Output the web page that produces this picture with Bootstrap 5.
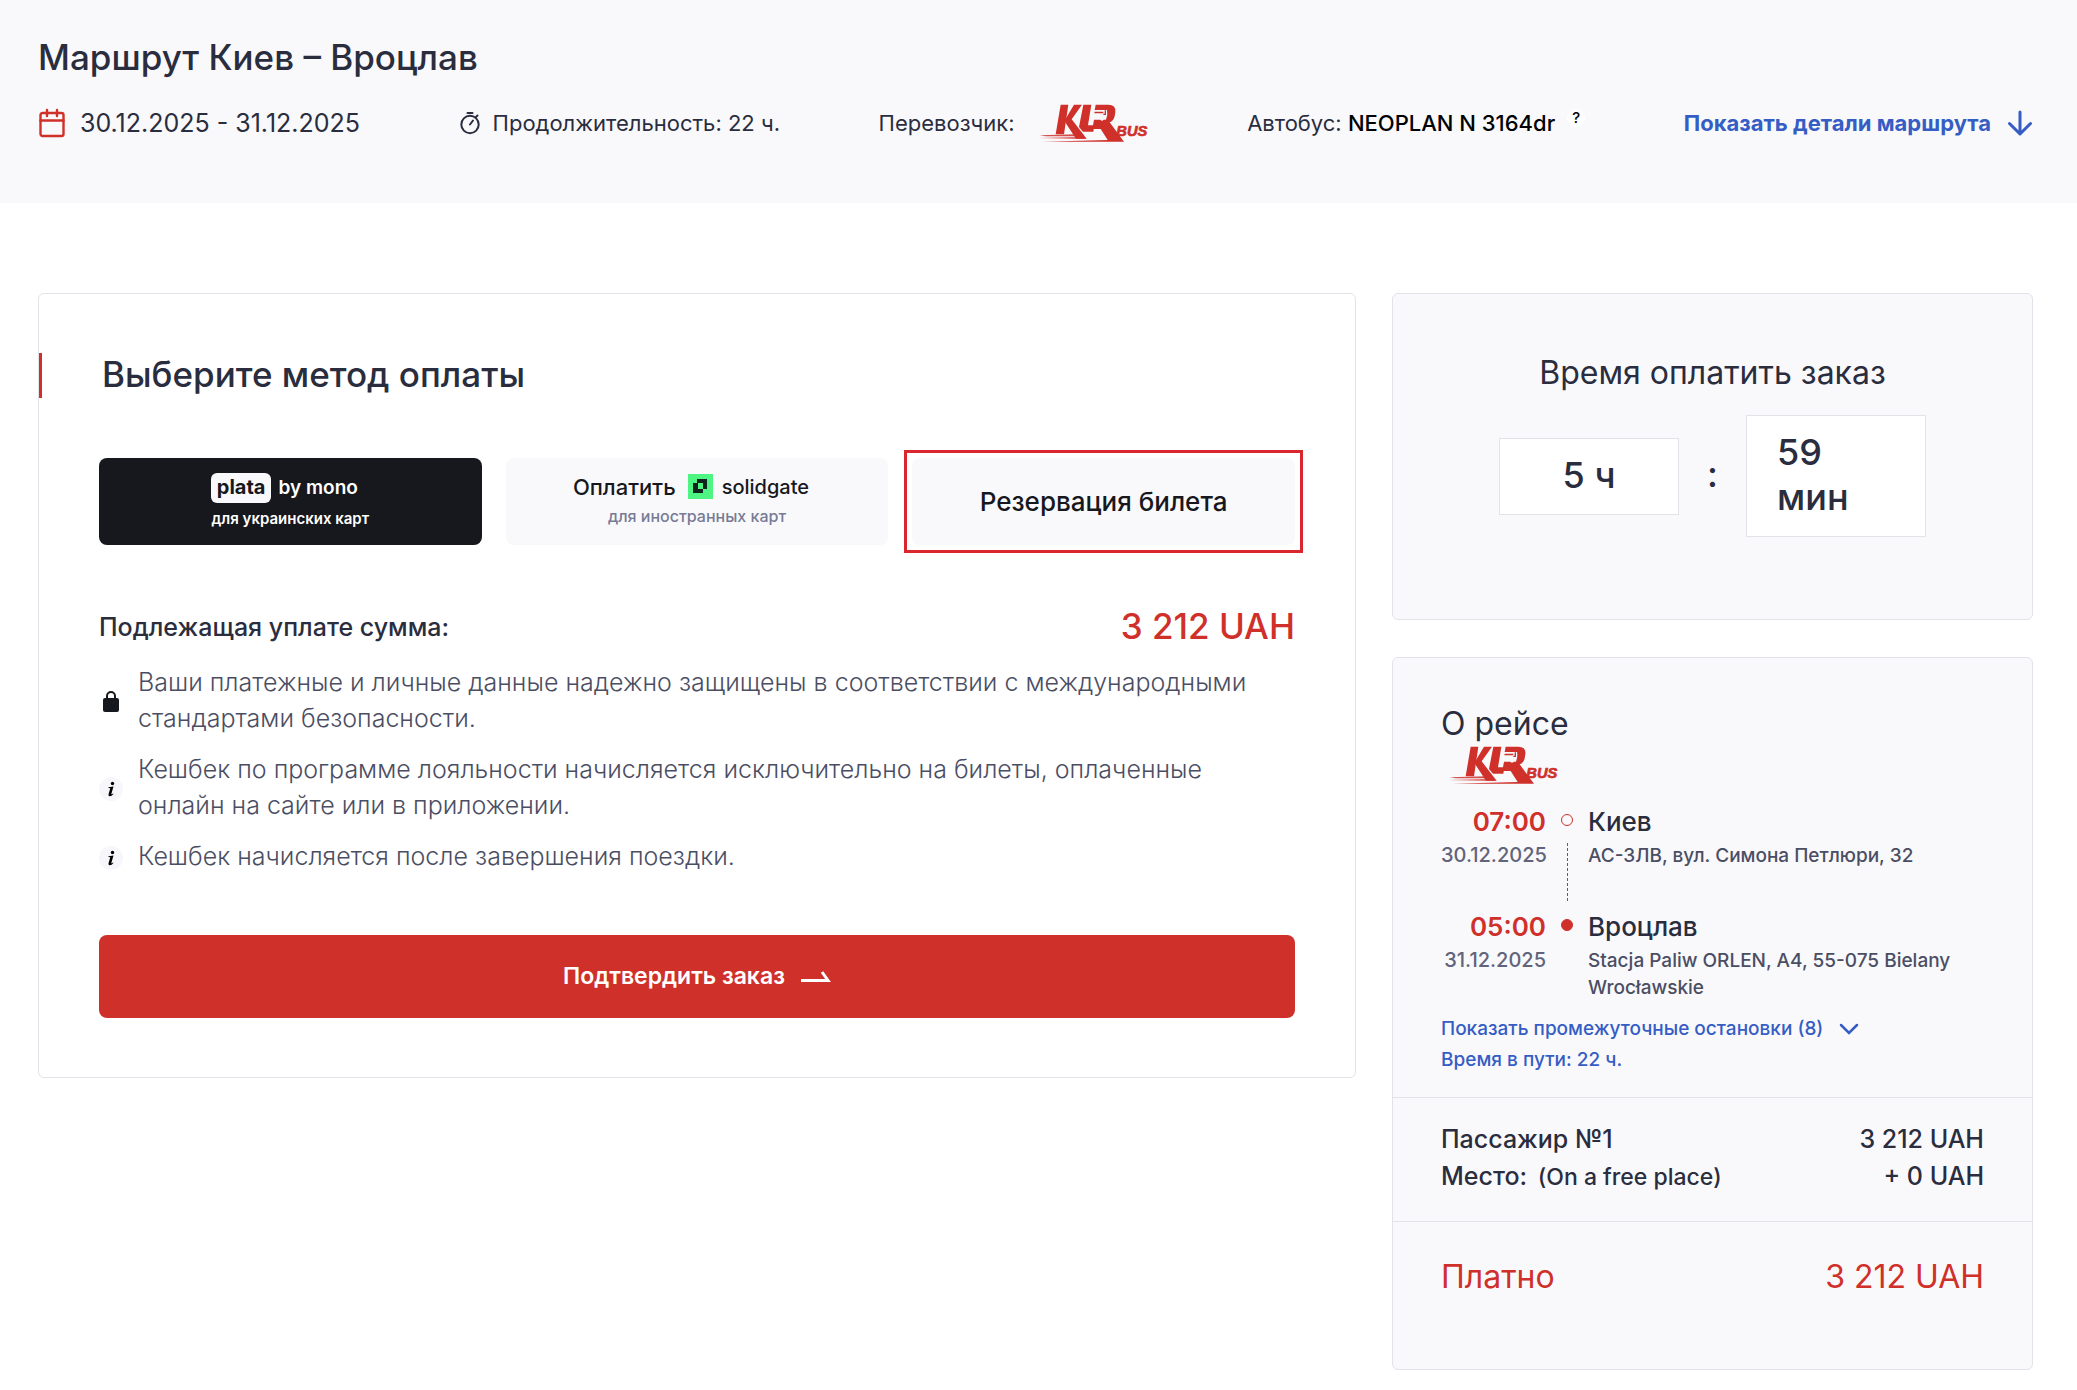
<!DOCTYPE html>
<html lang="ru">
<head>
<meta charset="utf-8">
<meta name="viewport" content="width=device-width, initial-scale=1">
<title>Маршрут Киев – Вроцлав</title>
<link href="https://cdn.jsdelivr.net/npm/bootstrap@5.3.0/dist/css/bootstrap.min.css" rel="stylesheet">
<style>
:root { --ink:#2a2d3e; --ink-soft:#4b4e63; --dark:#17181d; --brand:#d0302a; --accent:#355dc4; --panel:#f9f9fc; --line:#e2e3e9; }
body { font-family: Inter, "Noto Sans", sans-serif; color: var(--ink); background:#fff; font-size:25px; line-height:36px; }
a { color: var(--accent); text-decoration:none; }
.page-x { padding-left:38px; padding-right:44px; }
.route-head { background: var(--panel); padding-top:33px; padding-bottom:57px; }
.title-lg { font-size:35px; line-height:48px; font-weight:500; margin:0; }
.route-head .title-lg { margin-bottom:19px; }
.route-facts { min-height:46px; }
.fact { font-size:22px; line-height:30px; }
.fact-date { font-size:25px; gap:14px; }
.fact-time { gap:12px; }
.help-dot { width:18px; height:18px; border:0; padding:0; border-radius:50%; background:#fff; color:#000; font-size:15px; line-height:18px; font-weight:500; margin-left:12px; margin-bottom:10px; }
.route-main { padding-top:90px; padding-bottom:18px; }
.route-main > .row { --bs-gutter-x:36px; }
.box { border:1px solid var(--line); border-radius:6px; }
.box-tint { background: var(--panel); }
.pay-box { padding:59px 60px 59px; }
.pay-title { border-left:3px solid var(--brand); line-height:43px; margin:0 -60px 60px; padding:0 0 2px 60px; }
.pay-methods { display:grid; grid-template-columns:repeat(3,1fr); gap:24px; margin-bottom:59px; }
.method { position:relative; height:87px; border:0; border-radius:8px; background:var(--panel); color:var(--dark); padding:0; display:flex; flex-direction:column; align-items:center; justify-content:center; font-weight:500; }
.method-dark { background:var(--dark); color:#fff; }
.method-dark .method-top { font-size:19px; font-weight:600; gap:7px; }
.method-dark .method-note { margin:6px 0 2px; font-weight:600; font-size:15px; color:#fff; }
.pill { background:#f9f9fc; color:var(--dark); border-radius:6px; padding:0 6px 2px; font-size:20px; line-height:28px; font-weight:700; }
.method-top { font-size:22px; line-height:30px; padding-right:12px; }
.method-note { font-size:16px; line-height:20px; color:#777b96; margin:4px 0 6px; }
.gate-name { font-size:20px; }
.gate-mark { margin:0 9px 0 12px; }
.method-active::after { content:""; position:absolute; inset:-8px; border:3px solid #d9262f; }
.method-active { font-size:26px; }
.sum-price { font-size:35px; line-height:45px; font-weight:500; color:var(--brand); }
.sum-label { font-weight:500; }
.notes { list-style:none; margin:15px 0 61px; padding:0; display:flex; flex-direction:column; gap:15px; color:var(--ink-soft); font-weight:300; }
.notes li { display:flex; align-items:center; gap:15px; }
.note-ico { width:24px; height:24px; flex:none; margin-top:3px; }
.btn-confirm { height:83px; background:var(--brand); color:#fff; border:0; border-radius:8px; font-size:23px; font-weight:600; padding-bottom:6px; }
.btn-confirm:hover { background:#b92822; color:#fff; }
.timer-box { padding:56px 48px 82px; }
.title-md { font-size:32px; line-height:45px; font-weight:400; margin:0; }
.clock { margin-top:20px; font-size:36px; line-height:45px; font-weight:500; }
.clock-cell { width:180px; padding:14px 30px 16px; background:#fff; border:1px solid var(--line); }
.clock-sep { width:67px; text-align:center; padding-bottom:4px; }
.side-stack { gap:37px; }
.trip-part { padding:48px 48px 22px; }
.trip-part + .trip-part { border-top:1px solid var(--line); padding-top:23px; padding-bottom:25px; }
.trip-part.trip-total { padding-top:32px; padding-bottom:70px; color:var(--brand); }
.trip-part .title-flight { line-height:36px; }
.trip-logo { margin:4px 0 23px 8px; display:block; }
.stop { display:grid; grid-template-columns:105px 16px 1fr; column-gap:13px; font-size:19px; line-height:27px; font-weight:500; color:var(--ink-soft); }
.stop-main { font-size:26px; line-height:30px; margin-bottom:5px; color:var(--ink); }
.stop-time { color:var(--brand); font-weight:600; }
.stop-first { min-height:105px; }
.stop-date { color:#61647a; font-size:20px; }
.track { display:flex; flex-direction:column; align-items:center; }
.track-dot { width:12px; height:12px; flex:none; margin-top:7px; border:1px solid var(--brand); border-radius:50%; }
.track-end { background:var(--brand); }
.track-line { width:0; flex:1; margin:17px 0 11px; border-left:1px dashed var(--brand); }
.trip-links { margin-top:12px; font-size:19px; line-height:31px; font-weight:500; color:var(--accent); }
.fare { line-height:37px; font-weight:500; }
.fare-seat { font-size:23px; }
.trip-total .title-md { color:inherit; }
.klr-word { font-family:"Liberation Sans", sans-serif; font-size:44px; font-weight:700; font-style:italic; fill:var(--brand); stroke:var(--brand); stroke-width:2px; }
</style>
</head>
<body>
<header class="route-head page-x">
  <h1 class="title-lg">Маршрут Киев – Вроцлав</h1>
  <div class="route-facts d-flex align-items-center justify-content-between">
    <div class="fact fact-date d-flex align-items-center">
      <svg width="28" height="30" viewBox="0 0 28 30" fill="none" stroke="#d0302a" stroke-width="2.4" stroke-linecap="round" aria-hidden="true"><rect x="2.500" y="5" width="23" height="23" rx="2"/><path d="M2.500 12.500h23M9 2v6M19 2v6"/></svg>
      30.12.2025 - 31.12.2025
    </div>
    <div class="fact fact-time d-flex align-items-center">
      <svg width="22" height="24" viewBox="0 0 22 24" fill="none" stroke="#2a2d3e" stroke-width="2" stroke-linecap="round" aria-hidden="true"><circle cx="11" cy="13.500" r="8.700"/><path d="M8.500 2h5M11 13.500l3-4M17 6l1.500-1.500"/></svg>
      Продолжительность: 22 ч.
    </div>
    <div class="fact d-flex align-items-center">
      Перевозчик:
      <svg class="ms-4" width="110" height="38" viewBox="20 31 330 114" role="img" aria-label="KLR Bus">
        <g id="klr-mark" fill="#d0302a">
          <path d="M85 33h23L95 122H70z"/>
          <path d="M98 78l27-45h24l-31 44 45 58h-32l-31-47z"/>
          <path d="M22 125l110-3 12 6H40zM20 133l125-3 18 6z" opacity=".85"/>
          <path d="M153 33h24l-10 62h19l-3 19h-31l-12-14z"/>
          <path d="M190 33h38q24 0 21 23l-2 12q-3 14-15 18l43 58H30l196-5-21-33h-25l5-28h36q6-14 3-29h-37z"/>
          <path d="M187 54h26v5h-27zM217 50h4v14h-8v-4h4z"/>
          <circle cx="209" cy="76" r="5" fill="#f9f9fc"/>
        </g>
        <text class="klr-word" x="252" y="126">BUS</text>
      </svg>
    </div>
    <div class="fact d-flex align-items-center">
      <span>Автобус: <span class="fw-medium text-black">NEOPLAN N 3164dr</span></span>
      <button type="button" class="help-dot">?</button>
    </div>
    <a href="#details" class="fact fw-bold d-flex align-items-center">
      Показать детали маршрута
      <svg class="ms-3" width="26" height="26" viewBox="0 0 26 26" fill="none" stroke="currentColor" stroke-width="3" stroke-linecap="round" stroke-linejoin="round" aria-hidden="true"><path d="M13 2v22M2.500 13.500L13 24l10.500-10.500"/></svg>
    </a>
  </div>
</header>

<main class="route-main page-x">
  <div class="row align-items-start">
    <div class="col-8">
      <section class="box pay-box">
        <h2 class="title-lg pay-title">Выберите метод оплаты</h2>
        <div class="pay-methods">
          <button type="button" class="method method-dark">
            <span class="method-top d-flex align-items-center"><span class="pill">plata</span>by mono</span>
            <span class="method-note">для украинских карт</span>
          </button>
          <button type="button" class="method">
            <span class="method-top d-flex align-items-center">Оплатить
              <svg class="gate-mark" width="25" height="25" viewBox="0 0 25 25" aria-hidden="true"><path fill="#4ff582" d="M0 0h25v25H0z"/><path fill="#10231d" fill-rule="evenodd" d="M9 5h10v10h-4v4H5V9h4zm1 4v6h5V9z"/></svg>
              <span class="gate-name">solidgate</span></span>
            <span class="method-note">для иностранных карт</span>
          </button>
          <button type="button" class="method method-active">Резервация билета</button>
        </div>
        <div class="d-flex align-items-center justify-content-between">
          <span class="sum-label">Подлежащая уплате сумма:</span>
          <span class="sum-price">3 212 UAH</span>
        </div>
        <ul class="notes">
          <li>
            <svg class="note-ico" viewBox="0 0 24 24" aria-hidden="true"><rect x="4" y="8" width="16" height="14" rx="2" fill="#17181d"/><path d="M8 9V6a4 4 0 018 0v3" fill="none" stroke="#17181d" stroke-width="2"/></svg>
            <span>Ваши платежные и личные данные надежно защищены в соответствии с международными<br>стандартами безопасности.</span>
          </li>
          <li>
            <svg class="note-ico" viewBox="0 0 24 24" aria-hidden="true"><circle cx="12" cy="12" r="12" fill="#f7f7fb"/><circle cx="13.500" cy="6.500" r="1.700"/><path d="M9.500 10.200l5-.8-2.200 7.500q-.2 1 1.700-.5l.5.500q-2.200 2.600-4 2.300-1.500-.4-.9-2.300l1.700-5.600-1.900-.3z"/></svg>
            <span>Кешбек по программе лояльности начисляется исключительно на билеты, оплаченные<br>онлайн на сайте или в приложении.</span>
          </li>
          <li>
            <svg class="note-ico" viewBox="0 0 24 24" aria-hidden="true"><circle cx="12" cy="12" r="12" fill="#f7f7fb"/><circle cx="13.500" cy="6.500" r="1.700"/><path d="M9.500 10.200l5-.8-2.200 7.500q-.2 1 1.700-.5l.5.500q-2.200 2.600-4 2.300-1.500-.4-.9-2.300l1.700-5.600-1.900-.3z"/></svg>
            <span>Кешбек начисляется после завершения поездки.</span>
          </li>
        </ul>
        <button type="button" class="btn btn-confirm w-100 d-flex align-items-center justify-content-center">
          Подтвердить заказ
          <svg class="ms-3" width="30" height="12" viewBox="0 0 30 12" fill="none" stroke="currentColor" stroke-width="3" aria-hidden="true"><path d="M0 9.500h27L21 1"/></svg>
        </button>
      </section>
    </div>

    <div class="col-4 d-flex flex-column side-stack">
      <section class="box box-tint timer-box">
        <h2 class="title-md text-center">Время оплатить заказ</h2>
        <div class="clock d-flex align-items-center justify-content-center">
          <div class="clock-cell text-center">5 ч</div>
          <div class="clock-sep">:</div>
          <div class="clock-cell">59<br>мин</div>
        </div>
      </section>

      <section class="box box-tint">
        <div class="trip-part">
          <h2 class="title-md title-flight">О рейсе</h2>
          <svg class="trip-logo" width="110" height="38" viewBox="20 31 330 114" role="img" aria-label="KLR Bus">
            <use href="#klr-mark"/>
            <text class="klr-word" x="252" y="126">BUS</text>
          </svg>
          <div class="stop stop-first">
            <div class="text-end">
              <div class="stop-main stop-time">07:00</div>
              <div class="stop-date">30.12.2025</div>
            </div>
            <div class="track"><span class="track-dot"></span><span class="track-line"></span></div>
            <div>
              <div class="stop-main">Киев</div>
              <div>АС-3ЛВ, вул. Симона Петлюри, 32</div>
            </div>
          </div>
          <div class="stop">
            <div class="text-end">
              <div class="stop-main stop-time">05:00</div>
              <div class="stop-date">31.12.2025</div>
            </div>
            <div class="track"><span class="track-dot track-end"></span></div>
            <div>
              <div class="stop-main">Вроцлав</div>
              <div>Stacja Paliw ORLEN, A4, 55-075 Bielany<br>Wrocławskie</div>
            </div>
          </div>
          <div class="trip-links">
            <a href="#stops" class="d-flex align-items-center">Показать промежуточные остановки (8)
              <svg class="ms-3" width="20" height="12" viewBox="0 0 20 12" fill="none" stroke="currentColor" stroke-width="2.500" stroke-linecap="round" aria-hidden="true"><path d="M2 2l8 8 8-8"/></svg></a>
            <div>Время в пути: 22 ч.</div>
          </div>
        </div>
        <div class="trip-part fare">
          <div class="d-flex justify-content-between"><span>Пассажир №1</span><span>3 212 UAH</span></div>
          <div class="d-flex justify-content-between"><span>Место: <span class="fare-seat ms-1">(On a free place)</span></span><span>+ 0 UAH</span></div>
        </div>
        <div class="trip-part trip-total d-flex justify-content-between">
          <span class="title-md">Платно</span><span class="title-md">3 212 UAH</span>
        </div>
      </section>
    </div>
  </div>
</main>
<script src="https://cdn.jsdelivr.net/npm/bootstrap@5.3.0/dist/js/bootstrap.bundle.min.js"></script>
</body>
</html>
